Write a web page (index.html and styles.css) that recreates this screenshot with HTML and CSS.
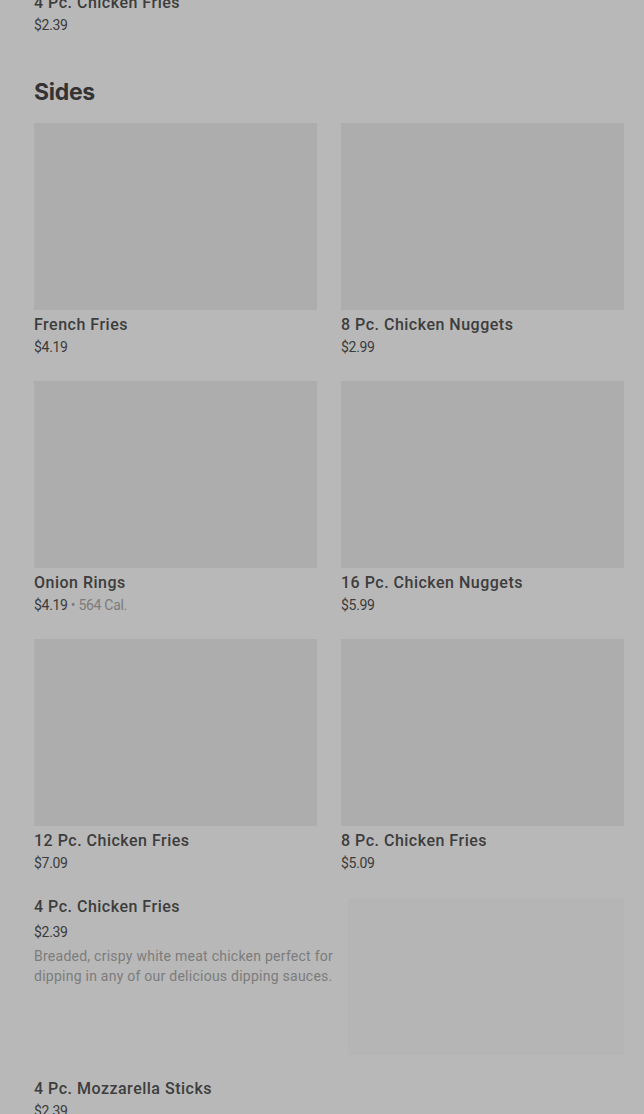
FILE: index.html
```html
<!DOCTYPE html>
<html lang="en">
<head>
    <meta charset="UTF-8">
    <meta name="viewport" content="width=device-width, initial-scale=1.0">
    <title>Menu</title>
    <link rel="stylesheet" href="styles.css">
</head>
<body>

    <div class="page">
        <div class="prev-item">
            <div class="item-title">4 Pc. Chicken Fries</div>
            <div class="item-price">$2.39</div>
        </div>

        <h2 class="section-title">Sides</h2>

        <div class="grid">
            <div class="card">
                <div class="card-img"></div>
                <div class="item-title">French Fries</div>
                <div class="item-price">$4.19</div>
            </div>
            <div class="card">
                <div class="card-img"></div>
                <div class="item-title">8 Pc. Chicken Nuggets</div>
                <div class="item-price">$2.99</div>
            </div>
            <div class="card">
                <div class="card-img"></div>
                <div class="item-title">Onion Rings</div>
                <div class="item-price">$4.19 <span class="muted">• 564 Cal.</span></div>
            </div>
            <div class="card">
                <div class="card-img"></div>
                <div class="item-title">16 Pc. Chicken Nuggets</div>
                <div class="item-price">$5.99</div>
            </div>
            <div class="card">
                <div class="card-img"></div>
                <div class="item-title">12 Pc. Chicken Fries</div>
                <div class="item-price">$7.09</div>
            </div>
            <div class="card">
                <div class="card-img"></div>
                <div class="item-title">8 Pc. Chicken Fries</div>
                <div class="item-price">$5.09</div>
            </div>
        </div>

        <div class="list-item">
            <div class="list-text">
                <div class="item-title">4 Pc. Chicken Fries</div>
                <div class="item-price list-price">$2.39</div>
                <p class="item-desc">Breaded, crispy white meat chicken perfect for dipping in any of our delicious dipping sauces.</p>
            </div>
            <div class="list-img"></div>
        </div>

        <div class="list-item">
            <div class="list-text">
                <div class="item-title">4 Pc. Mozzarella Sticks</div>
                <div class="item-price">$2.39</div>
            </div>
        </div>
    </div>

</body>
</html>
```

FILE: styles.css
```css
body {
    margin: 0;
    background-color: #b8b8b8;
    font-family: Roboto, "Liberation Sans", sans-serif;
    color: #393939;
    overflow: hidden;
}
.page {
    padding: 0 20px 0 34px;
    margin-top: -10px;
}
.prev-item {
    padding-top: 1px;
}
.item-title {
    font-size: 16px;
    font-weight: 500;
    line-height: 24px;
    letter-spacing: 0.5px;
    color: #3d3d3d;
}
.item-price {
    font-size: 14px;
    line-height: 20px;
    letter-spacing: -0.3px;
    color: #3b3b3b;
}
.muted {
    color: #7c7c7c;
}
.section-title {
    font-family: Inter, sans-serif;
    font-size: 23px;
    font-weight: 700;
    line-height: 32px;
    letter-spacing: -0.3px;
    color: #333;
    margin: 41px 0 15px 0;
}
.grid {
    display: grid;
    grid-template-columns: 283px 283px;
    column-gap: 24px;
    row-gap: 24px;
}
.card-img {
    height: 187px;
    background-color: #adadad;
    margin-bottom: 3px;
}
.list-item {
    display: flex;
    align-items: flex-start;
    gap: 12px;
    margin-top: 22px;
}
.list-text {
    width: 302px;
}
.list-price {
    margin-top: 3px;
}
.item-desc {
    margin: 4px 0 0 0;
    font-size: 14px;
    line-height: 20px;
    letter-spacing: 0.25px;
    color: #7c7c7c;
}
.list-img {
    width: 276px;
    height: 157px;
    margin-top: 3px;
    background-color: #b5b5b5;
}
```
